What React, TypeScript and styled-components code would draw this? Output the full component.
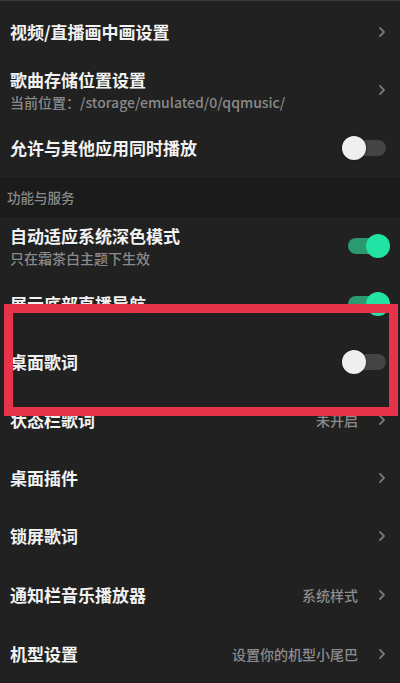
import React from "react";
import styled, { createGlobalStyle } from "styled-components";

const Global = createGlobalStyle`
  html, body { margin: 0; padding: 0; background: #212121; }
  body { font-family: "Noto Sans CJK SC", "Noto Sans", sans-serif; }
`;

const Page = styled.div`
  position: relative;
  width: 400px;
  height: 683px;
  box-sizing: border-box;
  background: #212121;
  border-top: 1px solid #3a3a3a;
  padding-top: 2px;
  overflow: hidden;
  display: flex;
  flex-direction: column;
`;

const Row = styled.div<{ $h?: number }>`
  height: ${(p) => p.$h ?? 58}px;
  flex: none;
  display: flex;
  align-items: center;
  padding: 0 12px 0 10px;
  box-sizing: border-box;
`;

const TextCol = styled.div`
  flex: 1;
  display: flex;
  flex-direction: column;
  gap: 2px;
  min-width: 0;
`;

const Title = styled.div`
  color: #f2f2f2;
  font-size: 17px;
  font-weight: 700;
  line-height: 22px;
  white-space: nowrap;
`;

const Sub = styled.div`
  color: #8a8a8a;
  font-size: 14px;
  font-weight: 500;
  line-height: 18px;
  white-space: nowrap;
`;

const Value = styled.div`
  color: #8c8c8c;
  font-size: 14px;
  font-weight: 500;
  margin-right: 20px;
  white-space: nowrap;
`;

const Section = styled.div`
  height: 40px;
  flex: none;
  background: #1b1b1b;
  display: flex;
  align-items: center;
  padding-left: 7px;
  color: #8a8a8a;
  font-size: 13.5px;
  font-weight: 500;
`;

const Track = styled.div<{ $on: boolean }>`
  position: relative;
  width: ${(p) => (p.$on ? 42 : 44)}px;
  height: 24px;
  flex: none;
  margin-right: ${(p) => (p.$on ? -2 : 2)}px;
  &::before {
    content: "";
    position: absolute;
    top: 4px;
    left: ${(p) => (p.$on ? 0 : 12)}px;
    right: ${(p) => (p.$on ? 12 : 0)}px;
    height: 16px;
    border-radius: 8px;
    background: ${(p) => (p.$on ? "#2b9a71" : "#444444")};
  }
  &::after {
    content: "";
    position: absolute;
    top: 0;
    ${(p) => (p.$on ? "right: 0;" : "left: 0;")}
    width: 24px;
    height: 24px;
    border-radius: 50%;
    background: ${(p) => (p.$on ? "#22e3a3" : "#efefef")};
    box-shadow: ${(p) => (p.$on ? "none" : "0 0 2px rgba(0,0,0,0.6)")};
  }
`;

const Chev = styled.svg`
  flex: none;
  width: 8px;
  height: 12px;
  margin-right: 2px;
`;

const Highlight = styled.div`
  position: absolute;
  left: 4px;
  top: 303px;
  width: 394px;
  height: 112px;
  box-sizing: border-box;
  border: 9px solid #e8344a;
  pointer-events: none;
`;

const Chevron = () => (
  <Chev viewBox="0 0 8 12">
    <path d="M2 2 L6 6 L2 10" fill="none" stroke="#777" strokeWidth="1.8" strokeLinecap="round" strokeLinejoin="round" />
  </Chev>
);

type Item = {
  title: string;
  sub?: string;
  value?: string;
  kind: "chev" | "on" | "off";
  h?: number;
};

const top: Item[] = [
  { title: "视频/直播画中画设置", kind: "chev" },
  { title: "歌曲存储位置设置", sub: "当前位置：/storage/emulated/0/qqmusic/", kind: "chev" },
  { title: "允许与其他应用同时播放", kind: "off" },
];

const bottom: Item[] = [
  { title: "自动适应系统深色模式", sub: "只在霜茶白主题下生效", kind: "on" },
  { title: "展示底部直播导航", kind: "on" },
  { title: "桌面歌词", kind: "off" },
  { title: "状态栏歌词", value: "未开启", kind: "chev" },
  { title: "桌面插件", kind: "chev" },
  { title: "锁屏歌词", kind: "chev" },
  { title: "通知栏音乐播放器", value: "系统样式", kind: "chev", h: 60 },
  { title: "机型设置", value: "设置你的机型小尾巴", kind: "chev" },
];

const SettingRow = ({ item }: { item: Item }) => (
  <Row $h={item.h}>
    <TextCol>
      <Title>{item.title}</Title>
      {item.sub && <Sub>{item.sub}</Sub>}
    </TextCol>
    {item.value && <Value>{item.value}</Value>}
    {item.kind === "chev" ? <Chevron /> : <Track $on={item.kind === "on"} />}
  </Row>
);

export default function App() {
  return (
    <>
      <Global />
      <Page>
        {top.map((it) => (
          <SettingRow key={it.title} item={it} />
        ))}
        <Section>功能与服务</Section>
        {bottom.map((it) => (
          <SettingRow key={it.title} item={it} />
        ))}
        <Highlight />
      </Page>
    </>
  );
}
